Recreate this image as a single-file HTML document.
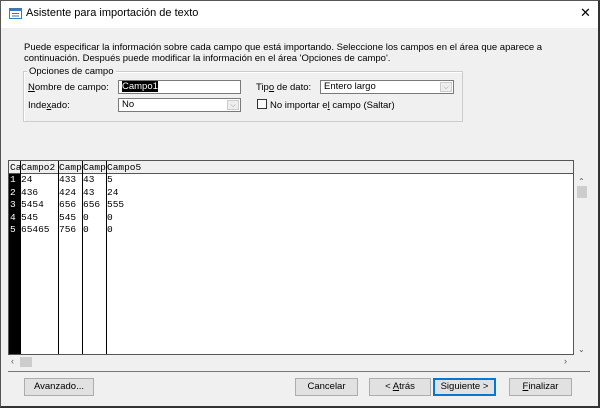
<!DOCTYPE html>
<html><head><meta charset="utf-8"><style>
*{margin:0;padding:0;box-sizing:border-box}
body{width:600px;height:408px;overflow:hidden;background:#f0f0f0;font-family:"Liberation Sans",sans-serif;font-size:10px;color:#000;position:relative}
.abs{position:absolute}
.win{position:absolute;left:0;top:0;width:600px;height:408px;border:1px solid #555;border-right:2px solid #333;border-bottom:2px solid #333}
.title{position:absolute;left:0;top:0;width:598px;height:28px;background:#fff}
.inp{position:absolute;background:#fff;border:1px solid #7a7a7a;height:14px;font-size:9.5px;padding-left:3px;line-height:12px}
.dd{position:absolute;right:1px;top:1px;width:12px;height:10px;border:1px solid #ccc;background:#eee;font-size:7px;color:#888;text-align:center;line-height:9px}
.btn{position:absolute;top:378px;height:18px;background:#e1e1e1;border:1px solid #adadad;font-size:9.5px;text-align:center;line-height:16px}
.grid{position:absolute;left:8px;top:160px;width:566px;height:195px;background:#fff;border:1px solid #555;font-family:"Liberation Mono",monospace;font-size:9.5px}
.col{position:absolute;top:0;height:193px;border-right:1px solid #000}
.hdr{position:absolute;left:0;top:0;width:564px;height:13px;background:#f0f0f0;border-bottom:1px solid #555}
.cell{position:absolute;white-space:pre;line-height:12.5px}
</style></head><body>
<div class="title"></div>
<svg class="abs" style="left:9px;top:8px" width="13" height="11"><rect x="0.5" y="0.5" width="12" height="10" fill="#fff" stroke="#4a73b5"/><rect x="1" y="1" width="11" height="2" fill="#4a73b5"/><line x1="3" y1="5.5" x2="10" y2="5.5" stroke="#4a73b5"/><line x1="3" y1="8" x2="10" y2="8" stroke="#4a73b5"/></svg>
<div class="abs" style="left:26px;top:7px;font-size:11px">Asistente para importación de texto</div>
<div class="abs" style="left:580px;top:5px;font-size:13px">✕</div>
<div class="abs" style="left:24px;top:42px;font-size:9.5px;line-height:11px">Puede especificar la información sobre cada campo que está importando. Seleccione los campos en el área que aparece a<br>continuación. Después puede modificar la información en el área 'Opciones de campo'.</div>
<div class="abs" style="left:23px;top:71px;width:210px;height:51px;border:1px solid #ccc;border-right:none"></div>
<div class="abs" style="left:23px;top:71px;width:440px;height:51px;border:1px solid #ccc;box-shadow:inset 1px 1px #fff"></div>
<div class="abs" style="left:27px;top:66px;background:#f0f0f0;padding:0 2px;font-size:9.5px">Opciones de campo</div>
<div class="abs" style="left:28px;top:82px;font-size:9.5px"><u>N</u>ombre de campo:</div>
<div class="inp" style="left:118px;top:80px;width:123px"><span style="background:#000;color:#fff">Campo1</span></div>
<div class="abs" style="left:28px;top:100px;font-size:9.5px">Inde<u>x</u>ado:</div>
<div class="inp" style="left:118px;top:98px;width:123px">No<div class="dd">⌵</div></div>
<div class="abs" style="left:256px;top:82px;font-size:9.5px">Tip<u>o</u> de dato:</div>
<div class="inp" style="left:320px;top:80px;width:134px">Entero largo<div class="dd">⌵</div></div>
<div class="abs" style="left:257px;top:99px;width:10px;height:10px;border:1px solid #333;background:#fff"></div>
<div class="abs" style="left:270px;top:100px;font-size:9.5px">No importar e<u>l</u> campo (Saltar)</div>
<div class="grid">
<div class="hdr"></div>
<div class="abs" style="left:0;top:13px;width:11px;height:180px;background:#000"></div>
<div class="col" style="left:0;width:12px"></div>
<div class="col" style="left:0;width:50px"></div>
<div class="col" style="left:0;width:74px"></div>
<div class="col" style="left:0;width:98px"></div>
<div class="cell" style="left:1px;top:1px;width:10px;overflow:hidden">Ca</div>
<div class="cell" style="left:12px;top:1px;width:38px;overflow:hidden">Campo2</div>
<div class="cell" style="left:50px;top:1px;width:24px;overflow:hidden">Campo3</div>
<div class="cell" style="left:74px;top:1px;width:24px;overflow:hidden">Campo4</div>
<div class="cell" style="left:98px;top:1px">Campo5</div>
<div class="cell" style="left:1px;top:13px;color:#fff">1
2
3
4
5</div>
<div class="cell" style="left:12px;top:13px">24
436
5454
545
65465</div>
<div class="cell" style="left:50px;top:13px">433
424
656
545
756</div>
<div class="cell" style="left:74px;top:13px">43
43
656
0
0</div>
<div class="cell" style="left:98px;top:13px">5
24
555
0
0</div>
</div>
<div class="abs" style="left:578px;top:177px;font-size:8px;color:#555">⌃</div>
<div class="abs" style="left:577px;top:186px;width:10px;height:12px;background:#cdcdcd"></div>
<div class="abs" style="left:578px;top:345px;font-size:8px;color:#555">⌄</div>
<div class="abs" style="left:11px;top:356px;font-size:9px;color:#555">‹</div>
<div class="abs" style="left:20px;top:357px;width:12px;height:10px;background:#cdcdcd"></div>
<div class="abs" style="left:564px;top:356px;font-size:9px;color:#555">›</div>
<div class="abs" style="left:8px;top:371px;width:582px;height:1px;background:#777"></div>
<div class="btn" style="left:24px;width:70px">Avanzado...</div>
<div class="btn" style="left:295px;width:63px">Cancelar</div>
<div class="btn" style="left:369px;width:62px">&lt; <u>A</u>trás</div>
<div class="btn" style="left:433px;width:63px;border:1px solid #0078d7;box-shadow:inset 0 0 0 1px #0078d7">Siguiente &gt;</div>
<div class="btn" style="left:509px;width:63px"><u>F</u>inalizar</div>
<div class="win"></div>
</body></html>
